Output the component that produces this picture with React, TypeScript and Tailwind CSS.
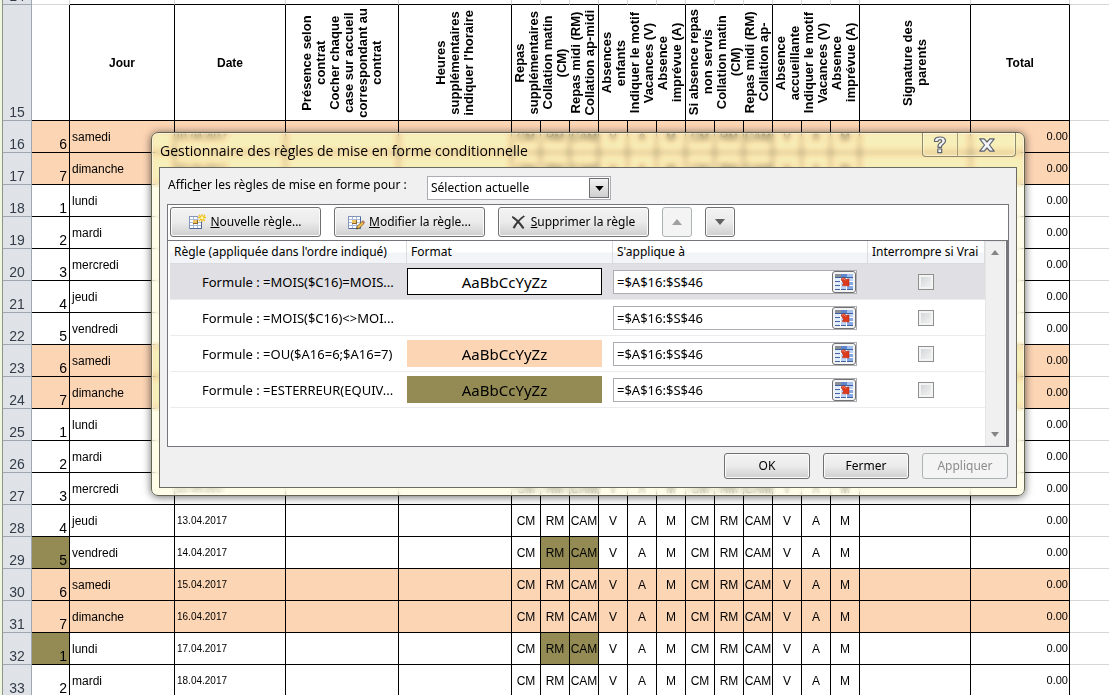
import React, { useState } from "react";
import clsx from "clsx";

const DAYS = ["lundi", "mardi", "mercredi", "jeudi", "vendredi", "samedi", "dimanche"];
const CODES = ["CM", "RM", "CAM", "V", "A", "M", "CM", "RM", "CAM", "V", "A", "M"];
const HOLIDAYS = [29, 32];

const ROWS = Array.from({ length: 18 }, (_, i) => {
  const num = 16 + i;
  const weekday = ((5 + i) % 7) + 1;
  return {
    num,
    weekday,
    day: DAYS[weekday - 1],
    date: `${String(i + 1).padStart(2, "0")}.04.2017`,
    weekend: weekday >= 6,
    holiday: HOLIDAYS.includes(num),
  };
});

const COLUMN_WIDTHS = [
  "w-[3px]",
  "w-[29px]",
  "w-[38px]",
  "w-[105px]",
  "w-[111px]",
  "w-[113px]",
  "w-[113px]",
  ...CODES.map(() => "w-[29px]"),
  "w-[111px]",
  "w-[99px]",
  "",
];

const REPAS = ["Repas", "supplémentaires", "Collation matin", "(CM)", "Repas midi (RM)", "Collation ap-midi"];
const ABSENCES = ["Absences", "enfants", "Indiquer le motif", "Vacances (V)", "Absence", "imprévue (A)"];
const NON_SERVIS = ["Si absence repas", "non servis", "Collation matin", "(CM)", "Repas midi (RM)", "Collation ap-"];
const ACCUEILLANTE = ["Absence", "accueillante", "Indiquer le motif", "Vacances (V)", "Absence", "imprévue (A)"];
const PRESENCE = ["Présence selon", "contrat", "Cocher chaque", "case sur accueil", "correspondant au", "contrat"];

const CELL = "border-r border-b border-black p-0";

function Upright({ lines, span = 1 }: { lines: string[]; span?: number }) {
  return (
    <th colSpan={span} className={CELL}>
      <div className="flex h-[115px] items-center justify-center">
        <div className="rotate-180 text-center text-[13px] leading-[14px] font-bold whitespace-nowrap [writing-mode:vertical-rl]">
          {lines.map((line, i) => (
            <div key={i}>{line}</div>
          ))}
        </div>
      </div>
    </th>
  );
}

function Strip() {
  return <td className="border-r border-[#8f948a] bg-[#eef8e0] p-0" />;
}

function RowHeader({ num }: { num: number }) {
  return (
    <th
      scope="row"
      className="border-r border-b border-[#9fa7b1] bg-[#dfe3e8] p-0 text-center align-bottom text-sm leading-4 font-normal text-[#333c48]"
    >
      {num}
    </th>
  );
}

function Sheet() {
  return (
    <table className="w-full min-w-[1071px] table-fixed border-separate border-spacing-0 text-xs text-black">
      <colgroup>
        {COLUMN_WIDTHS.map((w, i) => (
          <col key={i} className={w} />
        ))}
      </colgroup>
      <thead>
        <tr className="h-[5px]">
          <Strip />
          <th className="border-r border-b border-[#9fa7b1] bg-[#dfe3e8] p-0 font-normal text-[#333c48]">
            <div className="flex h-1 items-end justify-center overflow-hidden text-sm leading-4">14</div>
          </th>
          <td className="border-r border-b border-[#d6d6d6] p-0" />
          {Array.from({ length: 18 }, (_, i) => (
            <td key={i} className="border-r border-b border-r-[#d6d6d6] border-b-black p-0" />
          ))}
          <td className="border-b border-[#d6d6d6] p-0" />
        </tr>
        <tr className="h-[116px]">
          <Strip />
          <RowHeader num={15} />
          <td className={CELL} />
          <th className={CELL}>Jour</th>
          <th className={CELL}>Date</th>
          <Upright lines={PRESENCE} />
          <Upright lines={["Heures", "supplémentaires", "indiquer l'horaire"]} />
          <Upright lines={REPAS} span={3} />
          <Upright lines={ABSENCES} span={3} />
          <Upright lines={NON_SERVIS} span={3} />
          <Upright lines={ACCUEILLANTE} span={3} />
          <Upright lines={["Signature des", "parents"]} />
          <th className={CELL}>Total</th>
          <td className="border-b border-[#d6d6d6] p-0" />
        </tr>
      </thead>
      <tbody>
        {ROWS.map((row) => (
          <tr key={row.num} className="h-8">
            <Strip />
            <RowHeader num={row.num} />
            <td
              className={clsx(
                "border-r border-b border-black p-0 pr-[2px] text-right align-bottom text-sm leading-4",
                row.holiday && "bg-[#948b54]",
                row.weekend && "bg-[#fcd5b4]",
              )}
            >
              {row.weekday}
            </td>
            <td className={clsx(CELL, row.weekend && "bg-[#fcd5b4]")}>
              <span className="pl-[2px]">{row.day}</span>
            </td>
            <td className={clsx("border-r border-b border-black p-0 text-[10px]", row.weekend && "bg-[#fcd5b4]")}>
              <span className="pl-[2px]">{row.date}</span>
            </td>
            <td className={clsx(CELL, row.weekend && "bg-[#fcd5b4]")} />
            <td className={clsx(CELL, row.weekend && "bg-[#fcd5b4]")} />
            {CODES.map((code, i) => (
              <td
                key={i}
                className={clsx(
                  "border-r border-b border-black p-0 text-center whitespace-nowrap",
                  row.weekend && "bg-[#fcd5b4]",
                  row.holiday && (i === 1 || i === 2) && "bg-[#948b54]",
                )}
              >
                {code}
              </td>
            ))}
            <td className={clsx(CELL, row.weekend && "bg-[#fcd5b4]")} />
            <td className={clsx("border-r border-b border-black p-0 text-right text-[11px]", row.weekend && "bg-[#fcd5b4]")}>
              <span className="pr-[1px]">0.00</span>
            </td>
            <td className="border-b border-[#d6d6d6] p-0" />
          </tr>
        ))}
      </tbody>
    </table>
  );
}

function SheetGlyph() {
  return (
    <>
      <rect x="0.5" y="2.5" width="12" height="12" fill="#fff" stroke="#8296b8" />
      <path d="M1 5.5h11M1 8.5h11M1 11.5h11M4.5 3v11M8.5 3v11" stroke="#a9bbd8" />
      <path d="M12.5 3v11.5H1" fill="none" stroke="#4e689c" />
      <rect x="4" y="6" width="5" height="4" fill="#f0c160" />
      <path d="M4 9.5h5M8.500 6v4" stroke="#8b6a2c" />
    </>
  );
}

function NewRuleIcon() {
  return (
    <svg width="17" height="16" viewBox="0 0 17 16" aria-hidden="true">
      <SheetGlyph />
      <rect x="9" y="0" width="8" height="7" fill="#ededed" />
      <path d="M13 0v8M9 3.500h8M10 1l6 6M16 1l-6 6" stroke="#f2c21a" strokeWidth="1.300" />
      <circle cx="13" cy="3.800" r="1.500" fill="#fff7b8" />
    </svg>
  );
}

function EditRuleIcon() {
  return (
    <svg width="17" height="16" viewBox="0 0 17 16" aria-hidden="true">
      <SheetGlyph />
      <path d="M8.500 15l.8-2.800 4.900-4.700 1.900 1.900-5 4.800z" fill="#f3c04b" stroke="#7d5a22" strokeWidth=".8" />
      <path d="M14.200 7.500l1-.9 1.600 1.700-.8 1z" fill="#e79a86" stroke="#8a4b3b" strokeWidth=".6" />
      <path d="M8.500 15l.4-1.500 1.100 1.100z" fill="#222" />
    </svg>
  );
}

function DeleteIcon() {
  return (
    <svg width="13" height="14" viewBox="0 0 13 14" aria-hidden="true">
      <path d="M.5 1.500C4 3 9 8 12 13L10.500 13.300C7.500 9 4 5 .5 2.800z" fill="#333" stroke="#333" strokeWidth=".8" />
      <path d="M11.800.800C8 3 4 7.500 1 12.500L2.500 13.200C5 8.500 8 4.500 12.500 1.500z" fill="#333" stroke="#333" strokeWidth=".6" />
    </svg>
  );
}

function RangeIcon() {
  return (
    <svg width="18" height="16" viewBox="0 0 18 16" aria-hidden="true">
      <rect width="18" height="16" fill="#f7faff" />
      <rect x="0" y="0" width="6" height="3" fill="#8a8f98" />
      <rect x="6" y="0" width="12" height="3" fill="#5f86cc" />
      <rect x="12" y="0" width="6" height="3" fill="#a3bfee" />
      <rect x="0" y="4" width="6" height="12" fill="#e2ebfa" />
      <rect x="6" y="4" width="12" height="12" fill="#bcd2f6" />
      <rect x="12" y="8" width="6" height="8" fill="#86a9e6" />
      <path d="M0 3.500h18" stroke="#3c5f9f" />
      <path d="M0 7.500h6M0 11.500h6M0 15.500h18" stroke="#44639c" />
      <path d="M6 7.500h12M6 11.500h12" stroke="#fff" />
      <path d="M5.500 4v12M11.500 4v12" stroke="#fff" />
      <path d="M6 5 9 3.500l2 2 3-.5v7l-7-.5 1.500-2z" fill="#dc3a1c" stroke="#b52a14" strokeWidth=".6" />
      <path d="M7 5.300l1.800-.8 1.700 2" fill="none" stroke="#f58b6c" />
    </svg>
  );
}

function Triangle({ up, className }: { up?: boolean; className: string }) {
  return (
    <svg width="10" height="6" viewBox="0 0 10 6" className={className} aria-hidden="true">
      <path d={up ? "M0 6 5 0l5 6z" : "M0 0h10L5 6z"} fill="currentColor" />
    </svg>
  );
}

const BUTTON =
  "flex items-center justify-center rounded-[3px] border border-[#707070] bg-linear-to-b from-[#f3f3f3] from-0% via-[#ebebeb] via-50% to-[#cfcfcf] to-100% shadow-[inset_0_0_0_1px_#fbfbfb]";
const BUTTON_OFF = "flex items-center justify-center rounded-[3px] border border-[#adb2b5] bg-[#f4f4f4]";

type Rule = { formula: string; preview: string | null };

const RULES: Rule[] = [
  { formula: "Formule : =MOIS($C16)=MOIS...", preview: "border border-black bg-white" },
  { formula: "Formule : =MOIS($C16)<>MOI...", preview: null },
  { formula: "Formule : =OU($A16=6;$A16=7)", preview: "bg-[#fcd5b4]" },
  { formula: "Formule : =ESTERREUR(EQUIV...", preview: "bg-[#948b54]" },
];

const HEAD = "h-[23px] border-r border-b border-[#d9dbdf] p-0 pl-1 text-left font-normal whitespace-nowrap";

function RuleList() {
  const [selected, setSelected] = useState(0);
  return (
    <div className="flex h-[206px] border-t border-r-2 border-[#75757b] bg-white pl-[2px]">
      <div className="min-w-0 flex-1">
        <table className="w-full table-fixed border-separate border-spacing-0">
          <colgroup>
            <col className="w-[237px]" />
            <col className="w-[206px]" />
            <col className="w-[255px]" />
            <col />
          </colgroup>
          <thead className="bg-linear-to-b from-white from-45% to-[#f2f4f7] to-55%">
            <tr>
              <th className={HEAD}>Règle (appliquée dans l'ordre indiqué)</th>
              <th className={HEAD}>Format</th>
              <th className={HEAD}>S'applique à</th>
              <th className={HEAD}>Interrompre si Vrai</th>
            </tr>
          </thead>
          <tbody>
            {RULES.map((rule, i) => (
              <tr key={i} onClick={() => setSelected(i)} className={clsx("h-9", selected === i && "bg-[#dfdfe4]")}>
                <td className="border-b border-[#ececee] p-0 pl-8 text-[13px] whitespace-nowrap">{rule.formula}</td>
                <td className="border-b border-[#ececee] p-0">
                  {rule.preview && (
                    <div className={clsx("flex h-[27px] w-[195px] items-center justify-center text-[15px]", rule.preview)}>
                      AaBbCcYyZz
                    </div>
                  )}
                </td>
                <td className="border-b border-[#ececee] p-0">
                  <div className="flex h-6 w-[244px] items-center border border-[#abadb3] bg-white">
                    <input
                      aria-label={`Plage de la règle ${i + 1}`}
                      defaultValue="=$A$16:$S$46"
                      className="min-w-0 flex-1 bg-transparent pl-[3px] text-[13px] outline-none"
                    />
                    <button
                      type="button"
                      aria-label="Choisir la plage"
                      className="flex h-[22px] w-6 items-center justify-center rounded-[3px] border border-[#707070] bg-[#f4f4f4]"
                    >
                      <RangeIcon />
                    </button>
                  </div>
                </td>
                <td className="border-b border-[#ececee] p-0 pr-[2px] text-center">
                  <input
                    type="checkbox"
                    aria-label={`Interrompre si Vrai, règle ${i + 1}`}
                    className="inline-block size-4 appearance-none border border-[#8e8f8f] bg-linear-to-br from-[#cfd3d6] to-[#f6f6f6] align-middle shadow-[inset_0_0_0_2px_#f4f4f4] checked:bg-[#4b73b9]"
                  />
                </td>
              </tr>
            ))}
          </tbody>
        </table>
      </div>
      <div className="mr-[1px] flex w-5 flex-col items-center justify-between border border-[#e6e6e6] bg-[#f0f0f0] py-2 text-[#858585]">
        <Triangle up className="h-[5px] w-2" />
        <Triangle className="h-[5px] w-2" />
      </div>
    </div>
  );
}

function TitleButtons() {
  return (
    <div className="flex h-6 w-[94px] overflow-hidden rounded-b-[4px] border border-t-0 border-[#8f8a68] shadow-[inset_0_0_0_1px_rgba(255,255,255,0.4)]">
      <button type="button" aria-label="Aide" className="flex w-[35px] items-center justify-center border-r border-[#a8a27a]">
        <svg width="14" height="18" viewBox="0 0 14 18" aria-hidden="true">
          <path
            d="M1.500 5.500V4.500C1.500 2 4 1 7 1s5.500 1.300 5.500 4c0 3-4 3.200-4 5.500v.8H5v-1.500c0-2.800 3.800-3 3.800-4.800C8.800 4 8 3.700 7 3.700S5 4.200 5 5.500zM4.800 13h3.900v3.700H4.800z"
            fill="#f3f4f7"
            stroke="#5c6270"
            strokeWidth="1.200"
            strokeLinejoin="round"
          />
        </svg>
      </button>
      <button type="button" aria-label="Fermer la fenêtre" className="flex flex-1 items-center justify-center">
        <svg width="16" height="14" viewBox="0 0 16 14" aria-hidden="true">
          <path
            d="M.8.800h4.400L8 4 10.800.800h4.400L10.500 7l4.700 6.200h-4.400L8 10l-2.800 3.200H.8L5.500 7z"
            fill="#f3f4f7"
            stroke="#5c6270"
            strokeWidth="1.200"
            strokeLinejoin="round"
          />
        </svg>
      </button>
    </div>
  );
}

function RulesDialog() {
  return (
    <section
      role="dialog"
      aria-labelledby="dialog-title"
      className="absolute top-[132px] left-[151px] w-[874px] rounded-[7px] border border-[#65654f] bg-[#fff4a0]/25 px-[7px] pb-[7px] font-['Noto_Sans','Open_Sans',sans-serif] text-[12px] leading-4 text-black shadow-[inset_0_0_0_1px_rgba(255,255,255,0.5),0_1px_9px_rgba(0,0,0,0.6)] backdrop-blur-[3px] backdrop-brightness-110 backdrop-hue-rotate-15"
    >
      <header className="flex h-[34px] items-start justify-between pr-px">
        <h1 id="dialog-title" className="pt-[6px] pl-[1px] font-['Open_Sans',sans-serif] text-[14px] leading-6">
          Gestionnaire des règles de mise en forme conditionnelle
        </h1>
        <TitleButtons />
      </header>
      <div className="border border-[#6b6b62] bg-[#f0f0f0] px-[7px] pt-2 pb-[8px]">
        <div className="flex h-6 items-center gap-3">
          <label htmlFor="scope" className="w-[248px] pb-[6px] pl-px whitespace-nowrap">
            Affic<u>h</u>er les règles de mise en forme pour :
          </label>
          <div className="relative h-6 w-[184px]">
            <select id="scope" className="size-full appearance-none border border-[#abadb3] bg-white pl-[3px]">
              <option>Sélection actuelle</option>
            </select>
            <span className="pointer-events-none absolute top-[2px] right-[2px] flex size-5 items-center justify-center border border-[#707070] bg-linear-to-b from-[#f2f2f2] to-[#cfcfcf]">
              <Triangle className="h-[5px] w-[9px] text-black" />
            </span>
          </div>
        </div>
        <div className="mt-1 border border-[#75757b] bg-white">
          <div className="flex h-[35px] gap-[13px] px-[2px] pt-[2px]">
            <button type="button" className={clsx(BUTTON, "h-[30px] w-[151px] gap-1")}>
              <NewRuleIcon />
              <span>
                <u>N</u>ouvelle règle...
              </span>
            </button>
            <button type="button" className={clsx(BUTTON, "h-[30px] w-[151px] gap-1")}>
              <EditRuleIcon />
              <span>
                <u>M</u>odifier la règle...
              </span>
            </button>
            <button type="button" className={clsx(BUTTON, "h-[30px] w-[151px] gap-[6px]")}>
              <DeleteIcon />
              <span>
                <u>S</u>upprimer la règle
              </span>
            </button>
            <button type="button" disabled aria-label="Monter" className={clsx(BUTTON_OFF, "size-[30px]")}>
              <Triangle up className="text-[#a0a0a0]" />
            </button>
            <button type="button" aria-label="Descendre" className={clsx(BUTTON, "size-[30px]")}>
              <Triangle className="text-[#606060]" />
            </button>
          </div>
          <RuleList />
        </div>
        <footer className="mt-[6px] flex justify-end gap-[13px] pr-px">
          <button type="button" className={clsx(BUTTON, "h-[26px] w-[86px]")}>
            OK
          </button>
          <button type="button" className={clsx(BUTTON, "h-[26px] w-[86px]")}>
            Fermer
          </button>
          <button type="button" disabled className={clsx(BUTTON_OFF, "h-[26px] w-[86px] text-[#8c8c8c]")}>
            Appliquer
          </button>
        </footer>
      </div>
    </section>
  );
}

export default function App() {
  return (
    <main className="relative h-screen overflow-hidden bg-white font-['Liberation_Sans',Arial,sans-serif]">
      <Sheet />
      <RulesDialog />
    </main>
  );
}
